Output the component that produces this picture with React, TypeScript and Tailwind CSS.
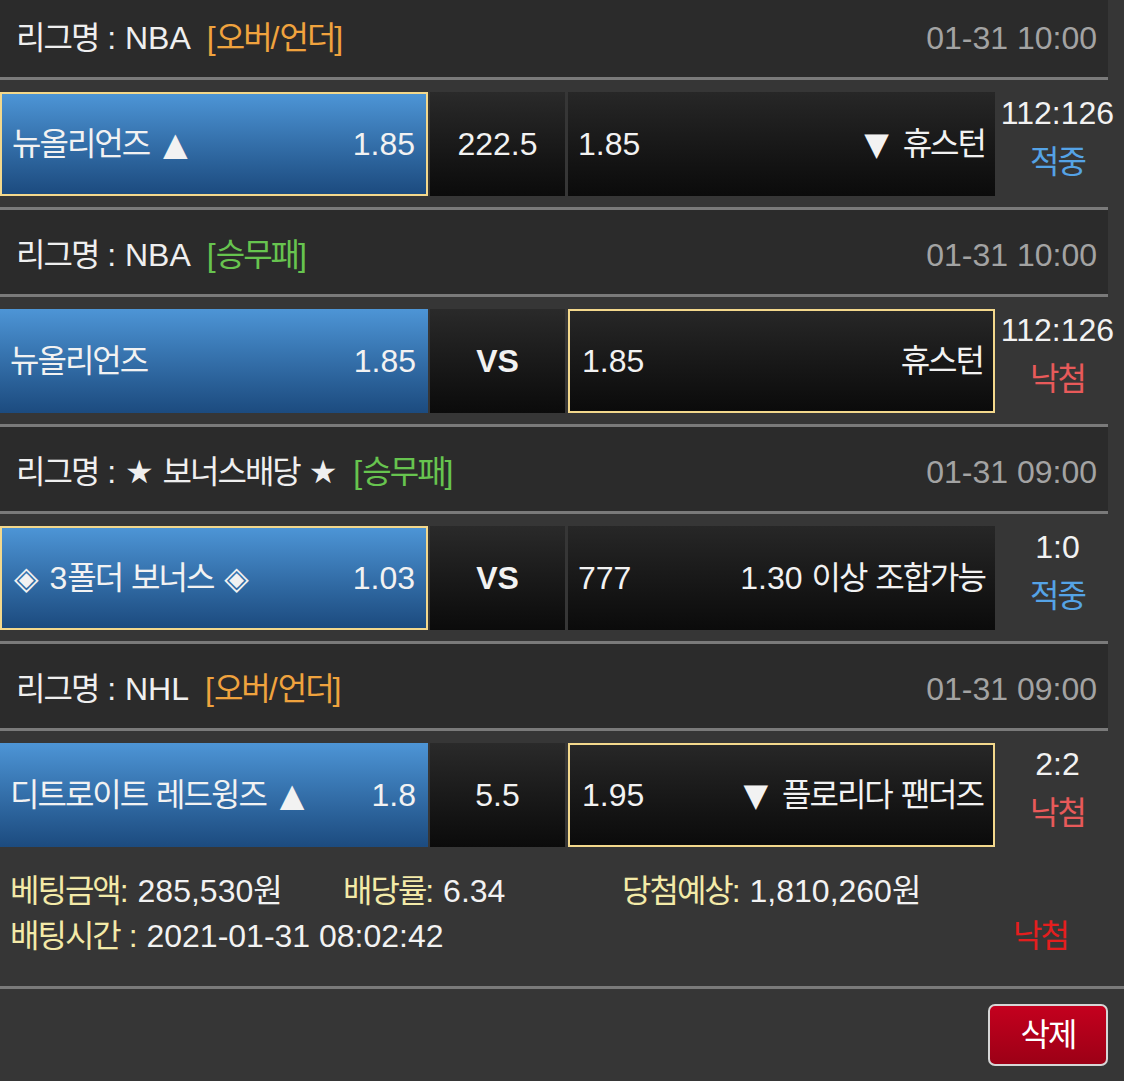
import React from "react";

function T({ s, className }: { s: string; className?: string }) {
  const parts = s.split(/([\uAC00-\uD7A3]+|[▲▼◈★])/);
  return (
    <span className={className}>
      {parts.map((p, i) => {
        if (i % 2 === 0) return <React.Fragment key={i}>{p}</React.Fragment>;
        if (p === "▲" || p === "▼")
          return (
            <span key={i} className="mx-[5px] font-['DejaVu_Sans',sans-serif]">
              {p}
            </span>
          );
        if (p === "◈")
          return (
            <span key={i} className="mx-[2px] font-['DejaVu_Sans',sans-serif]">
              {p}
            </span>
          );
        if (p === "★")
          return (
            <span key={i} className="font-['DejaVu_Sans',sans-serif]">
              {p}
            </span>
          );
        return (
          <span key={i} className="tracking-[-2px]">
            {p}
          </span>
        );
      })}
    </span>
  );
}

type Match = {
  league: string;
  tag: string;
  tagColor: "orange" | "green";
  date: string;
  home: string;
  homeOdd: string;
  homeSel: boolean;
  mid: string;
  midBold: boolean;
  awayOdd: string;
  away: string;
  awaySel: boolean;
  score: string;
  win: boolean;
};

const matches: Match[] = [
  {
    league: "리그명 : NBA",
    tag: "[오버/언더]",
    tagColor: "orange",
    date: "01-31 10:00",
    home: "뉴올리언즈 ▲",
    homeOdd: "1.85",
    homeSel: true,
    mid: "222.5",
    midBold: false,
    awayOdd: "1.85",
    away: "▼ 휴스턴",
    awaySel: false,
    score: "112:126",
    win: true,
  },
  {
    league: "리그명 : NBA",
    tag: "[승무패]",
    tagColor: "green",
    date: "01-31 10:00",
    home: "뉴올리언즈",
    homeOdd: "1.85",
    homeSel: false,
    mid: "VS",
    midBold: true,
    awayOdd: "1.85",
    away: "휴스턴",
    awaySel: true,
    score: "112:126",
    win: false,
  },
  {
    league: "리그명 : ★ 보너스배당 ★",
    tag: "[승무패]",
    tagColor: "green",
    date: "01-31 09:00",
    home: "◈ 3폴더 보너스 ◈",
    homeOdd: "1.03",
    homeSel: true,
    mid: "VS",
    midBold: true,
    awayOdd: "777",
    away: "1.30 이상 조합가능",
    awaySel: false,
    score: "1:0",
    win: true,
  },
  {
    league: "리그명 : NHL",
    tag: "[오버/언더]",
    tagColor: "orange",
    date: "01-31 09:00",
    home: "디트로이트 레드윙즈 ▲",
    homeOdd: "1.8",
    homeSel: false,
    mid: "5.5",
    midBold: false,
    awayOdd: "1.95",
    away: "▼ 플로리다 팬더즈",
    awaySel: true,
    score: "2:2",
    win: false,
  },
];

function Line({ full }: { full?: boolean }) {
  return <div className={full ? "w-[1124px] h-[3px] bg-[#7a7a7a]" : "w-[1108px] h-[3px] bg-[#7a7a7a]"} />;
}

function Group({ m, last }: { m: Match; last: boolean }) {
  return (
    <div>
      <div className="w-[1108px] h-[84px] bg-[#2b2b2b] flex items-center justify-between pl-[16px] pr-[11px] pt-[5px]">
        <div className="flex items-center text-[#efefef]">
          <T s={m.league} />
          <T
            s={m.tag}
            className={m.tagColor === "orange" ? "ml-[16px] text-[#f0a33e]" : "ml-[16px] text-[#67c44f]"}
          />
        </div>
        <span className="text-[#a3a3a3]">{m.date}</span>
      </div>
      <Line />
      <div className="h-[127px] pt-[12px] flex">
        <div
          className={
            "w-[428px] h-[104px] flex items-center justify-between bg-linear-to-b from-[#4d95d6] to-[#1c4b7f] " +
            (m.homeSel ? "border-2 border-[#f3d88c] pl-[10px] pr-[11px]" : "pl-[10px] pr-[12px]")
          }
        >
          <T s={m.home} />
          <span>{m.homeOdd}</span>
        </div>
        <div className="ml-[2px] w-[135px] h-[104px] flex items-center justify-center bg-linear-to-b from-[#2a2a2a] to-[#0b0b0b]">
          <span className={m.midBold ? "font-bold" : ""}>{m.mid}</span>
        </div>
        <div
          className={
            "ml-[3px] w-[427px] h-[104px] flex items-center justify-between bg-linear-to-b from-[#272727] to-[#0b0b0b] " +
            (m.awaySel ? "border-2 border-[#f3d88c] pl-[12px] pr-[10px]" : "pl-[10px] pr-[10px]")
          }
        >
          <span>{m.awayOdd}</span>
          <T s={m.away} />
        </div>
        <div className="w-[125px] h-[104px] flex flex-col items-center">
          <div className="h-[42px] leading-[42px]">{m.score}</div>
          <div className={"mt-[4px] h-[48px] leading-[48px] " + (m.win ? "text-[#55a3e6]" : "text-[#e85a5a]")}>
            <T s={m.win ? "적중" : "낙첨"} />
          </div>
        </div>
      </div>
      {!last && <Line />}
    </div>
  );
}

export default function App() {
  return (
    <div className="w-[1124px] h-[1081px] overflow-hidden bg-[#363636] text-[#f2f2f2] text-[32px] leading-none font-['Liberation_Sans','Noto_Sans_CJK_KR',sans-serif]">
      <div className="-mt-[7px]">
        {matches.map((m, i) => (
          <Group key={i} m={m} last={i === matches.length - 1} />
        ))}
      </div>
      <div className="pt-[10px] pl-[10px]">
        <div className="flex h-[45px] items-center">
          <div className="w-[333px]">
            <T s="베팅금액:" className="text-[#f3eaa8]" /> 285,530
            <T s="원" />
          </div>
          <div className="w-[279px]">
            <T s="배당률:" className="text-[#f3eaa8]" /> 6.34
          </div>
          <div>
            <T s="당첨예상:" className="text-[#f3eaa8]" /> 1,810,260
            <T s="원" />
          </div>
        </div>
        <div className="flex h-[45px] items-center justify-between pr-[56px]">
          <div>
            <T s="배팅시간 :" className="text-[#f3eaa8]" /> 2021-01-31 08:02:42
          </div>
          <T s="낙첨" className="text-[#e41e1e]" />
        </div>
      </div>
      <div className="mt-[28px]">
        <Line full />
      </div>
      <div className="flex justify-end pr-[16px] pt-[15px]">
        <button className="w-[120px] h-[62px] rounded-[7px] border-2 border-[#d6d6d6] bg-linear-to-b from-[#c4001e] to-[#9c0016] text-white flex items-center justify-center">
          <T s="삭제" />
        </button>
      </div>
    </div>
  );
}
